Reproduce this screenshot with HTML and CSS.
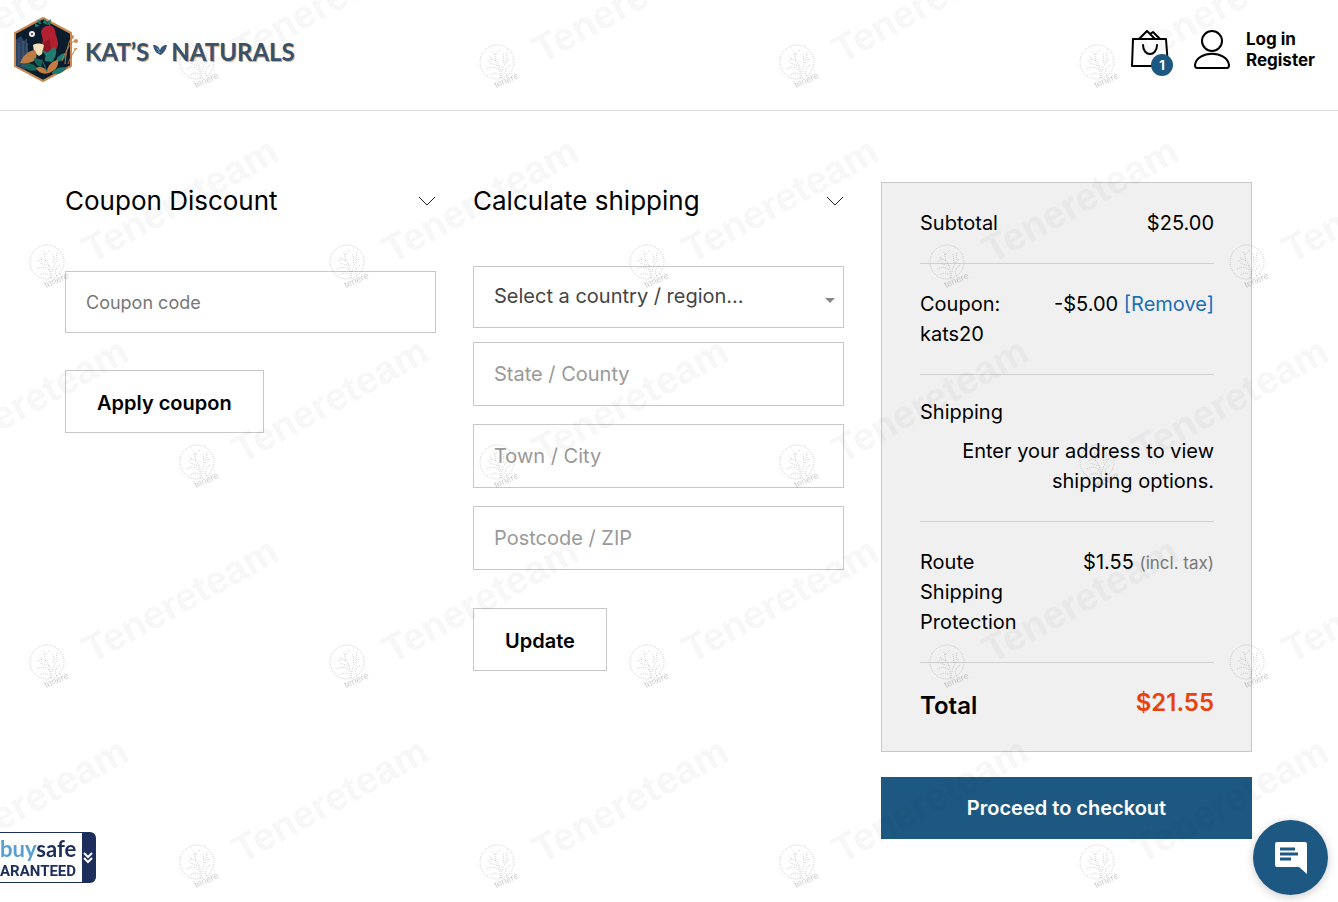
FILE: index.html
```html
<!DOCTYPE html>
<html lang="en">
<head>
  <meta charset="UTF-8" />
  <meta name="viewport" content="width=device-width, initial-scale=1" />
  <title>Cart - Kat's Naturals</title>
  <link rel="stylesheet" href="styles.css">
</head>
<body>
  <header class="site-header">
    <a class="logo" href="#">
      <svg class="logo-badge" viewBox="0 0 66 68" width="66" height="68" aria-hidden="true">
        <path d="M31 2 59 17V50L31 65 3 50V17Z" fill="#0b1d2c" stroke="#c98a4f" stroke-width="2" stroke-linejoin="round"/>
        <path d="M4 24l5-4 3 5 3-3 2 27-4 5-9-4z" fill="#2c4260"/>
        <path d="M7 27v22M11 25v26M15 27v20" stroke="#47607e" stroke-width="1"/>
        <path d="M26 4c2 0 3 2 3 4-3 0-4-2-3-4zM33 2l3 7-5-2zM39 3l-1 8-3-5zM23 7l5 3-5 1z" fill="#1b7a70"/>
        <path d="M30 13c4-5 12-4 13 1 0 5 3 8 3 14 0 5-4 9-9 10l-6-2-1-9c3-5-3-9 0-14z" fill="#b3202f"/>
        <path d="M31 27l7-4 1 13-7 1z" fill="#8f1626"/>
        <circle cx="20" cy="18" r="3" fill="#f0ece4"/><circle cx="20" cy="18" r="1" fill="#26394d"/>
        <path d="M21 29c3-2 8-2 11 0l-2 9-3 2-5-4z" fill="#f3e0bd"/>
        <path d="M8 47c3-8 8-12 15-13 2 4 2 7 0 10-4 3-9 4-15 3z" fill="#bd7b45"/>
        <path d="M33 45c-1-7 5-11 10-14 3 6 0 11-3 15zM44 45c1-5 6-8 10-8 0 6-4 9-10 8zM35 42l-5-8 8 4z" fill="#207c70"/>
        <path d="M11 49c6-3 12-2 15 5-6 2-13 0-15-5zM22 42l9 2-2 7c-4-1-7-4-7-9z" fill="#176258"/>
        <path d="M24 52c4-2 8-1 11 3 1-6 5-10 11-11 1 5-2 10-7 12-5 3-12 2-15-4z" fill="#c47c42"/>
        <path d="M40 57c3-4 8-6 14-5-3 4-8 7-14 5zM31 46l4 10" stroke="#1f776b" fill="#1f776b"/>
        <path d="M50 45c3-8 6-15 13-21M53 48c1-11 3-20 6-26M56 48c2-6 5-12 9-16" fill="none" stroke="#b77845" stroke-width="1"/>
        <g fill="#c98a4f"><circle cx="60" cy="21" r="2"/><circle cx="64" cy="25" r="2"/><circle cx="63" cy="33" r="1"/></g>
      </svg>
      <span class="logo-text">KAT’S</span>
      <svg class="logo-leaf" viewBox="0 0 14 12" width="14" height="12" aria-hidden="true">
        <path d="M0 1c4 0 6 2 7 5 1-3 3-5 7-5-1 4-2 7-6 10C4 10 1 7 0 1z" fill="#35577a"/>
        <path d="M4 4l3 5" stroke="#83a7b8"/>
      </svg>
      <span class="logo-text">NATURALS</span>
    </a>
    <div class="header-actions">
      <a class="cart-link" href="#" aria-label="Cart, 1 item">
        <svg viewBox="0 0 40 40" width="40" height="40" fill="none" stroke="#000" stroke-width="2" stroke-linejoin="round" aria-hidden="true">
          <path d="M3 9H36L38 36H2ZM9 9 17 1l8 8M20 4l3-2 7 7"/>
          <path d="M13 15c0 12 14 12 14 0" stroke-linecap="round"/>
        </svg>
        <span class="cart-count">1</span>
      </a>
      <svg class="user-icon" viewBox="0 0 38 40" width="38" height="40" fill="none" stroke="#000" stroke-width="2" aria-hidden="true">
        <circle cx="19" cy="11" r="10"/>
        <path d="M4 38c-2 0-2-2-2-3 2-15 32-15 34 0 0 1 0 3-2 3z"/>
      </svg>
      <div class="account-links">
        <a href="#">Log in</a>
        <a href="#">Register</a>
      </div>
    </div>
  </header>

  <main class="cart">
    <form class="coupon">
      <div class="section-head">
        <h2><label for="coupon-code">Coupon Discount</label></h2>
        <svg class="chevron" viewBox="0 0 18 10" width="18" height="10" aria-hidden="true"><path d="M1 1l8 8 8-8"/></svg>
      </div>
      <input class="field" id="coupon-code" type="text" placeholder="Coupon code" />
      <button class="btn" type="button">Apply coupon</button>
    </form>

    <form class="shipping">
      <div class="section-head">
        <h2>Calculate shipping</h2>
        <svg class="chevron" viewBox="0 0 18 10" width="18" height="10" aria-hidden="true"><path d="M1 1l8 8 8-8"/></svg>
      </div>
      <div class="fields">
        <div class="select-wrap">
          <select class="field" aria-label="Country / region">
            <option>Select a country / region…</option>
          </select>
        </div>
        <input class="field" type="text" placeholder="State / County" aria-label="State / County" />
        <input class="field" type="text" placeholder="Town / City" aria-label="Town / City" />
        <input class="field" type="text" placeholder="Postcode / ZIP" aria-label="Postcode / ZIP" />
      </div>
      <button class="btn" type="button">Update</button>
    </form>

    <section class="summary">
      <table class="totals">
        <tbody>
          <tr><th scope="row">Subtotal</th><td>$25.00</td></tr>
          <tr><th scope="row">Coupon: kats20</th><td>-$5.00 <a href="#">[Remove]</a></td></tr>
          <tr class="totals-shipping"><th scope="row">Shipping</th><td>Enter your address to view shipping options.</td></tr>
          <tr><th scope="row">Route Shipping Protection</th><td>$1.55 <small>(incl. tax)</small></td></tr>
          <tr class="totals-final"><th scope="row">Total</th><td>$21.55</td></tr>
        </tbody>
      </table>
      <button class="checkout" type="button">Proceed to checkout</button>
    </section>
  </main>

  <a class="buysafe" href="#">
    <span class="buysafe-text">
      <span class="buysafe-name"><span>buy</span>safe</span>
      <span class="buysafe-seal">ARANTEED</span>
    </span>
    <svg viewBox="0 0 10 12" width="10" height="12" fill="none" stroke="#fff" stroke-width="2" aria-hidden="true"><path d="M1 1l4 4 4-4M1 6l4 4 4-4"/></svg>
  </a>

  <button class="chat" type="button" aria-label="Open chat">
    <svg viewBox="0 0 32 32" width="32" height="32" aria-hidden="true">
      <path d="M2 0H30q2 0 2 2V32L24 25H2q-2 0-2-2V2q0-2 2-2z" fill="#fff"/>
      <path d="M5 7H20M5 12H23M5 17H16" stroke="#1d5882" stroke-width="3"/>
    </svg>
  </button>

  <svg class="watermark" aria-hidden="true">
    <defs>
      <g id="mark">
        <g fill="none" stroke="#777" stroke-opacity=".35" stroke-dasharray="1 1">
          <circle cx="47" cy="262" r="17"/>
          <path d="M50 278c0-8 1-12-4-17l-7-4M51 278c1-8 2-13 8-19M49 270c-4-4-8-3-12-1M46 261l-2-9M54 263l-1-10M49 266l-9-3M42 259l-5 3M56 260l1-8M48 274c-4-2-6 0-8 1M57 276c-3-4-2-7 3-11M45 255l5-5"/>
        </g>
        <text class="mark-small" transform="translate(46 288) rotate(-24)">tenere</text>
        <text class="mark-big" transform="translate(92 264) rotate(-29)">Tenereteam</text>
      </g>
      <pattern id="marks" width="300" height="400" patternUnits="userSpaceOnUse">
        <use href="#mark"/>
        <use href="#mark" x="150" y="200"/>
        <use href="#mark" x="-150" y="200"/>
        <use href="#mark" x="150" y="-200"/>
        <use href="#mark" x="-150" y="-200"/>
      </pattern>
    </defs>
    <rect width="100%" height="100%" fill="url(#marks)"/>
  </svg>
</body>
</html>
```
FILE: styles.css
```css
:root {
  --blue: #1d5882;
  --line: #c8c8c8;
  --orange: #e8430e;
}
* {
  box-sizing: border-box;
}
body {
  margin: 0;
  min-height: 100vh;
  background: #fff;
  color: #000;
  font-family: Inter, "Open Sans", sans-serif;
  font-size: 20px;
  line-height: 30px;
}
a {
  color: inherit;
  text-decoration: none;
}
h2 {
  margin: 0;
  font-size: 26px;
  font-weight: 400;
}

/* Header */
.site-header {
  display: flex;
  align-items: center;
  justify-content: space-between;
  height: 111px;
  padding: 0 23px 10px 12px;
  border-bottom: 1px solid #dcdcdc;
}
.logo {
  display: flex;
  align-items: center;
}
.logo-badge {
  margin-right: 7px;
}
.logo-leaf {
  margin: 0 4px;
}
.logo-text {
  padding-top: 3px;
  font-family: Lato, sans-serif;
  font-size: 24px;
  font-weight: 700;
  color: #35536e;
  text-shadow: 1px 1px 0 #e0a878;
}
.header-actions {
  display: flex;
  align-items: center;
}
.cart-link {
  position: relative;
  height: 40px;
}
.cart-count {
  position: absolute;
  right: -3px;
  bottom: -6px;
  width: 22px;
  border-radius: 50%;
  background: var(--blue);
  color: #fff;
  font-size: 13px;
  font-weight: 700;
  line-height: 22px;
  text-align: center;
}
.user-icon {
  margin: 0 15px 0 23px;
}
.account-links {
  display: flex;
  flex-direction: column;
  font-size: 17px;
  font-weight: 700;
  line-height: 21px;
}

/* Cart columns */
.cart {
  display: grid;
  grid-template-columns: repeat(3, 1fr);
  align-items: start;
  gap: 37px;
  padding: 71px 86px 60px 65px;
}
.section-head {
  display: flex;
  align-items: center;
  justify-content: space-between;
  height: 38px;
}
.chevron {
  fill: none;
  stroke: #222;
}
.field {
  display: block;
  width: 100%;
  height: 64px;
  padding: 0 20px;
  border: 1px solid var(--line);
  border-radius: 0;
  background: #fff;
  color: #444;
  font: inherit;
  appearance: none;
}
.field::placeholder {
  color: #999;
  opacity: 1;
}
.coupon .field {
  height: 62px;
  margin: 51px 0 37px;
  font-size: 18px;
}
.coupon .field::placeholder {
  color: #777;
}
.fields {
  display: flex;
  flex-direction: column;
  gap: 18px;
  margin: 46px 0 38px;
}
.select-wrap {
  position: relative;
  margin-bottom: -4px;
}
.select-wrap .field {
  height: 62px;
  padding-bottom: 2px;
}
.select-wrap::after {
  content: "";
  position: absolute;
  top: 32px;
  right: 9px;
  border: 5px solid transparent;
  border-top-color: #888;
  border-bottom: 0;
}
.btn {
  height: 63px;
  padding: 2px 31px 0;
  border: 1px solid var(--line);
  background: #fff;
  color: #000;
  font: inherit;
  font-weight: 600;
}

/* Order totals */
.totals {
  display: block;
  padding: 0 37px 0 38px;
  border: 1px solid var(--line);
  background: #f0f0f0;
}
.totals tbody {
  display: block;
}
.totals tr {
  display: flex;
  justify-content: space-between;
  padding: 25px 0;
  border-bottom: 1px solid #d0d0d0;
}
.totals th {
  width: 112px;
  padding: 0;
  font-weight: 400;
  text-align: left;
}
.totals td {
  padding: 0;
  text-align: right;
}
.totals td a {
  color: #1a6fb8;
}
.totals small {
  color: #777;
  font-size: 17px;
}
.totals .totals-shipping {
  flex-direction: column;
  gap: 9px;
  padding-top: 22px;
}
.totals .totals-final {
  padding-bottom: 27px;
  border-bottom: 0;
  font-size: 24px;
}
.totals-final th {
  font-weight: 600;
  line-height: 36px;
}
.totals-final td {
  color: var(--orange);
  font-weight: 600;
}
.checkout {
  width: 100%;
  height: 62px;
  margin-top: 25px;
  border: 0;
  background: var(--blue);
  color: #fff;
  font: inherit;
  font-weight: 600;
}

/* Floating widgets */
.buysafe {
  position: fixed;
  left: 0;
  bottom: 19px;
  display: flex;
  align-items: center;
  gap: 7px;
  height: 51px;
  padding-right: 2px;
  border: 1px solid #1e2e5c;
  border-left: 0;
  border-radius: 0 6px 6px 0;
  background: linear-gradient(to left, #1e2e5c 13px, #fff 13px);
  color: #1e2e5c;
}
.buysafe-text {
  display: flex;
  flex-direction: column;
  padding-top: 4px;
  font-weight: 700;
  line-height: 22px;
}
.buysafe-name {
  font-family: Lato, sans-serif;
  font-size: 22px;
}
.buysafe-name span {
  color: #559fd3;
}
.buysafe-seal {
  font-family: Roboto, sans-serif;
  font-size: 15px;
}
.chat {
  position: fixed;
  right: 10px;
  bottom: 7px;
  display: flex;
  align-items: center;
  justify-content: center;
  width: 75px;
  height: 75px;
  padding: 0;
  border: 0;
  border-radius: 50%;
  background: var(--blue);
  box-shadow: 0 2px 10px rgba(0, 0, 0, 0.2);
}

/* Repeating watermark over the page */
.watermark {
  position: absolute;
  top: 0;
  left: 0;
  width: 100%;
  height: 100%;
  pointer-events: none;
}
.mark-big {
  fill: #000;
  fill-opacity: 0.03;
  font-family: "Liberation Sans", sans-serif;
  font-size: 39px;
  font-weight: 700;
}
.mark-small {
  fill: #777;
  fill-opacity: 0.4;
  font-family: "Liberation Sans", sans-serif;
  font-size: 9px;
}
```
